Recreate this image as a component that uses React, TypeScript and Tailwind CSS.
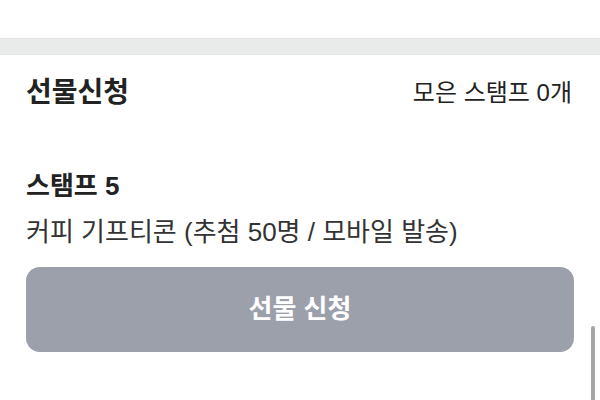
export default function App() {
  return (
    <div
      className="relative w-[600px] h-[400px] overflow-hidden bg-white text-[#222]"
      style={{ fontFamily: "'Liberation Sans', 'Noto Sans CJK KR', sans-serif" }}
    >
      <div className="h-[38px]" />
      <div className="h-[17px] bg-[#e9eaea] border-y border-[#e3e5e5]" />
      <div className="px-[26px]">
        <div className="flex items-center justify-between h-[76px]">
          <h2 className="text-[28px] font-bold leading-none">선물신청</h2>
          <span className="text-[24px] leading-none text-[#222] pr-[2px]">모은 스탬프 0개</span>
        </div>
        <div className="mt-[42px] text-[26px] font-semibold leading-none text-[#222]">스탬프 5</div>
        <div className="mt-[20px] text-[26px] leading-none text-[#333]">커피 기프티콘 (추첨 50명 / 모바일 발송)</div>
        <button className="mt-[22px] w-full h-[85px] rounded-[14px] bg-[#9ca0aa] text-white text-[26px] font-bold flex items-center justify-center">
          선물 신청
        </button>
      </div>
      <div className="absolute right-[5px] top-[326px] w-[4px] h-[80px] rounded-full bg-[#a6a6a6]" />
    </div>
  )
}
